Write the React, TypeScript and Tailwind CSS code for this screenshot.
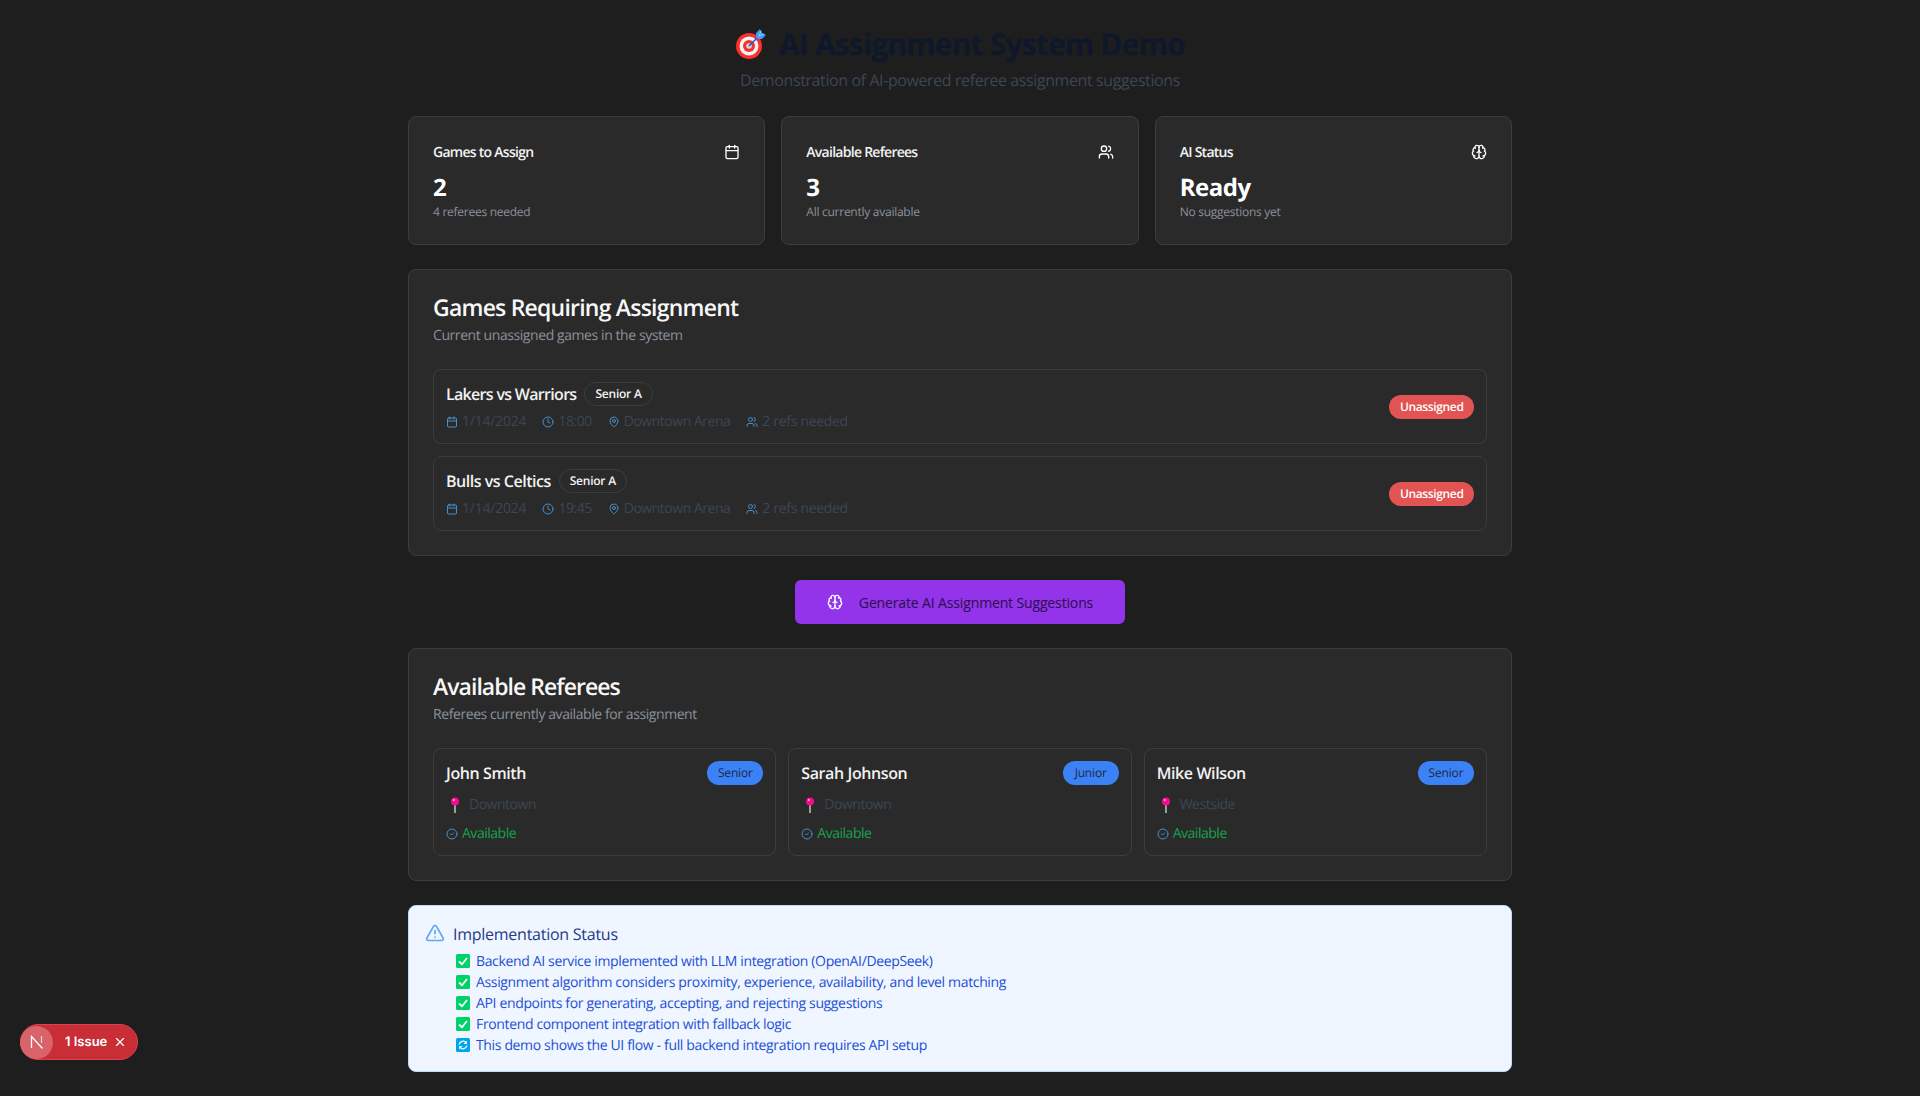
import { Brain, Calendar, CircleCheck, Clock, MapPin, TriangleAlert, Users, X } from 'lucide-react';

const games = [
  { title: 'Lakers vs Warriors', time: '18:00', titleClass: 'tracking-[-0.043em]' },
  { title: 'Bulls vs Celtics', time: '19:45', titleClass: 'tracking-[-0.03em]' },
];

const referees = [
  { name: 'John Smith', level: 'Senior', area: 'Downtown' },
  { name: 'Sarah Johnson', level: 'Junior', area: 'Downtown' },
  { name: 'Mike Wilson', level: 'Senior', area: 'Westside' },
];

const statusItems = [
  'Backend AI service implemented with LLM integration (OpenAI/DeepSeek)',
  'Assignment algorithm considers proximity, experience, availability, and level matching',
  'API endpoints for generating, accepting, and rejecting suggestions',
  'Frontend component integration with fallback logic',
];

function TargetEmoji() {
  return (
    <svg viewBox="0 0 32 32" className="w-[32px] h-[32px]">
      <circle cx="14" cy="18" r="13" fill="#f8312f" />
      <circle cx="14" cy="18" r="9.5" fill="#f4f4f4" />
      <circle cx="14" cy="18" r="6" fill="#f8312f" />
      <circle cx="14" cy="18" r="2.8" fill="#d4d4d4" />
      <path d="M14 18 L24 8" stroke="#1c5cd7" strokeWidth="1.6" />
      <path d="M21 5 L25 1 L27 5 L31 7 L27 11 L23 11 L21 9 Z" fill="#3f9bf5" />
      <path d="M24 8 L29 6 M24 8 L26 3" stroke="#8fd0ff" strokeWidth="1" />
    </svg>
  );
}

function PinEmoji() {
  return (
    <svg viewBox="0 0 14 16" className="w-[14px] h-[16px]">
      <rect x="6.2" y="7" width="1.6" height="9" fill="#b9b9b9" />
      <circle cx="7" cy="4.5" r="4" fill="#f70a8d" />
      <circle cx="5.8" cy="3" r="1" fill="#ffc0e0" />
    </svg>
  );
}

function CheckEmoji() {
  return (
    <svg viewBox="0 0 14 14" className="w-[14px] h-[14px] shrink-0 -mt-[2px]">
      <rect width="14" height="14" rx="1.5" fill="#00d26a" />
      <path d="M3 7.5 L6 10.2 L11 4" fill="none" stroke="#ffffff" strokeWidth="1.7" />
    </svg>
  );
}

function RefreshEmoji() {
  return (
    <svg viewBox="0 0 14 14" className="w-[14px] h-[14px] shrink-0 -mt-[2px]">
      <rect width="14" height="14" rx="1.5" fill="#00a6ed" />
      <path d="M3.2 6.5 A3.9 3.9 0 0 1 10 4.6 M10.8 7.5 A3.9 3.9 0 0 1 4 9.4" fill="none" stroke="#ffffff" strokeWidth="1.3" />
      <path d="M10.8 2.6 V6 H7.6 Z M3.2 11.4 V8 H6.4 Z" fill="#ffffff" />
    </svg>
  );
}

function NextLogo() {
  return (
    <svg viewBox="0 0 14 14" className="w-[14px] h-[14px]" fill="none">
      <path d="M1.5 13 V1.5 L12.5 13.5" stroke="#ffffff" strokeWidth="1.3" />
      <path d="M11.5 1 V8" stroke="#ffffff" strokeOpacity="0.65" strokeWidth="1.3" />
    </svg>
  );
}

function StatCard({ title, value, note, icon }: { title: string; value: string; note: string; icon: React.ReactNode }) {
  return (
    <div className="rounded-lg border border-[#3d3d3d] bg-[#2a2a2a] px-6 pt-[26px] pb-6">
      <div className="flex items-center justify-between mb-[9px]">
        <span className="text-sm font-semibold text-[#f2f2f2] leading-5 tracking-[-0.052em]">{title}</span>
        <span className="-mt-[2px]">{icon}</span>
      </div>
      <div className="text-2xl font-bold text-white leading-8">{value}</div>
      <div className="text-xs text-[#8b929c] leading-4 tracking-[-0.022em]">{note}</div>
    </div>
  );
}

function PanelHeader({ title, subtitle, titleClass }: { title: string; subtitle: string; titleClass: string }) {
  return (
    <div className="mb-[23px] pt-[1px]">
      <h2 className={`text-[23px] font-semibold text-[#f8f8f8] leading-6 mb-[7px] ${titleClass}`}>{title}</h2>
      <p className="text-sm text-[#8b929c] leading-5 tracking-[-0.03em]">{subtitle}</p>
    </div>
  );
}

export default function App() {
  return (
    <div className="min-h-screen bg-[#1e1e1e] font-['Open_Sans',sans-serif] tracking-[-0.03em] [text-rendering:geometricPrecision]">
      <div className="max-w-[1152px] mx-auto p-6 flex flex-col gap-6">
        <div className="text-center">
          <h1 className="flex items-center justify-center gap-3 text-3xl font-bold text-[#0f172a] leading-9 tracking-[-0.028em] pt-[2px]">
            <TargetEmoji />
            AI Assignment System Demo
          </h1>
          <p className="text-base text-[#3c4655] leading-6 mt-[6px] tracking-[-0.025em]">Demonstration of AI-powered referee assignment suggestions</p>
        </div>

        <div className="grid grid-cols-3 gap-4">
          <StatCard title="Games to Assign" value="2" note="4 referees needed" icon={<Calendar className="w-4 h-4 text-white" />} />
          <StatCard title="Available Referees" value="3" note="All currently available" icon={<Users className="w-4 h-4 text-white" />} />
          <StatCard title="AI Status" value="Ready" note="No suggestions yet" icon={<Brain className="w-4 h-4 text-white" />} />
        </div>

        <div className="rounded-lg border border-[#3d3d3d] bg-[#2a2a2a] p-6">
          <PanelHeader title="Games Requiring Assignment" subtitle="Current unassigned games in the system" titleClass="tracking-[-0.034em]" />
          <div className="flex flex-col gap-3">
            {games.map(game => (
              <div key={game.title} className="flex items-center justify-between rounded-lg border border-[#3d3d3d] px-3 pt-3 pb-[11px]">
                <div>
                  <div className="flex items-center gap-2 mb-[6px]">
                    <span className={`text-base font-semibold text-[#f2f2f2] ${game.titleClass}`}>{game.title}</span>
                    <span className="rounded-full border border-[#3d3d3d] px-[10px] h-6 flex items-center text-xs font-semibold text-[#f2f2f2] tracking-[-0.02em]">Senior A</span>
                  </div>
                  <div className="flex items-center gap-4 text-sm leading-5 text-[#3c4655]">
                    <span className="flex items-center gap-1 tracking-[-0.015em]"><Calendar className="w-3 h-3 text-[#4a8ec4]" />1/14/2024</span>
                    <span className="flex items-center gap-1"><Clock className="w-3 h-3 text-[#4a8ec4]" />{game.time}</span>
                    <span className="flex items-center gap-1"><MapPin className="w-3 h-3 text-[#4a8ec4]" />Downtown Arena</span>
                    <span className="flex items-center gap-1 tracking-[-0.022em]"><Users className="w-3 h-3 text-[#4a8ec4]" />2 refs needed</span>
                  </div>
                </div>
                <span className="rounded-full bg-[#e25353] px-[10.5px] h-6 flex items-center text-xs font-semibold text-white tracking-[-0.03em]">Unassigned</span>
              </div>
            ))}
          </div>
        </div>

        <div className="flex justify-center">
          <button className="flex items-center gap-4 h-11 w-[330px] justify-center rounded-md bg-[#9333ea] text-sm font-medium text-[#2a0f4d] tracking-[-0.01em]">
            <Brain className="w-4 h-4 text-white" />
            <span className="pt-[2px]">Generate AI Assignment Suggestions</span>
          </button>
        </div>

        <div className="rounded-lg border border-[#3d3d3d] bg-[#2a2a2a] p-6">
          <PanelHeader title="Available Referees" subtitle="Referees currently available for assignment" titleClass="tracking-[-0.042em]" />
          <div className="grid grid-cols-3 gap-3">
            {referees.map(referee => (
              <div key={referee.name} className="rounded-lg border border-[#3d3d3d] px-3 pt-3 pb-[11px]">
                <div className="flex items-center justify-between mb-[10px]">
                  <span className="text-base font-semibold text-[#f2f2f2] tracking-[-0.025em]">{referee.name}</span>
                  <span className="rounded-full bg-[#3b82f6] w-[56px] h-6 flex items-center justify-center text-xs font-medium text-[#1e293b] tracking-[-0.015em]">{referee.level}</span>
                </div>
                <div className="flex items-center gap-[7px] pl-[2px] text-sm leading-5 text-[#3c4655] mb-[9px]">
                  <PinEmoji />
                  {referee.area}
                </div>
                <div className="flex items-center gap-1 text-sm leading-5 text-[#16a34a]">
                  <CircleCheck className="w-3 h-3 text-[#4a8ec4]" />
                  Available
                </div>
              </div>
            ))}
          </div>
        </div>

        <div className="rounded-lg border border-[#bfdbfe] bg-[#eff6ff] px-4 pt-4 pb-[15px] flex gap-2">
          <TriangleAlert className="w-5 h-5 text-[#60a5fa] shrink-0 mt-[1px]" />
          <div>
            <div className="text-base font-medium leading-6 text-[#1e3a8a] mb-[6px] tracking-[-0.016em]">Implementation Status</div>
            <ul className="pl-[3px] flex flex-col gap-[1px] text-sm leading-5 text-[#1d4ed8] tracking-[-0.025em]">
              {statusItems.map(item => (
                <li key={item} className="flex items-center gap-[6px]"><CheckEmoji />{item}</li>
              ))}
              <li className="flex items-center gap-[6px]"><RefreshEmoji />This demo shows the UI flow - full backend integration requires API setup</li>
            </ul>
          </div>
        </div>
      </div>

      {/* dev overlay */}
      <div className="fixed left-[20px] top-[1024px] h-[36px] w-[118px] flex items-center rounded-full bg-[#c92d36] border border-[#d9444c] font-['Inter',sans-serif] tracking-normal">
        <span className="w-[33px] h-[33px] -ml-[1px] rounded-full bg-[#d9636a] flex items-center justify-center"><NextLogo /></span>
        <span className="ml-[12px] pt-[2px] text-[13px] font-semibold text-white tracking-normal">1 Issue</span>
        <X className="ml-[6px] w-[14px] h-[14px] text-white" />
      </div>
    </div>
  );
}
